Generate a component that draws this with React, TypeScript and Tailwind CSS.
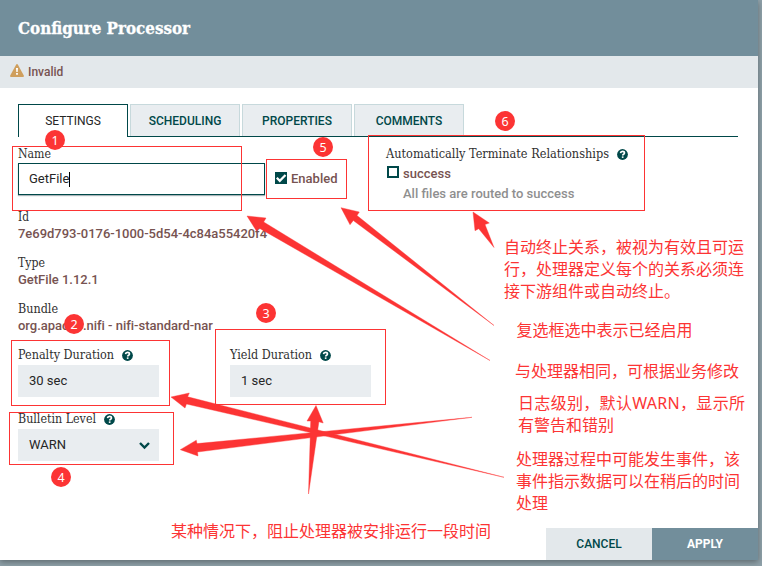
import type { ReactNode } from 'react';

const RED = '#fc3434';

function Help({ className = '' }: { className?: string }) {
  return (
    <svg viewBox="0 0 10 10" className={`h-[11px] w-[11px] shrink-0 ${className}`}>
      <circle cx="5" cy="5" r="4.9" fill="#004849" />
      <path d="M3.2 3.8C3.3 2.7 4 2.2 5 2.2S6.8 2.8 6.8 3.7C6.8 4.8 5.3 4.8 5.2 5.9" fill="none" stroke="#fff" strokeWidth="1.5" />
      <rect x="4.4" y="6.7" width="1.5" height="1.4" fill="#fff" />
    </svg>
  );
}

function Label({ children, help, width }: { children: string; help?: boolean; width: number }) {
  return (
    <div className="flex h-[18px] items-center whitespace-nowrap font-['Roboto_Slab','DejaVu_Serif_Condensed','DejaVu_Serif',serif] text-[12px] leading-[18px] text-[#262626]">
      <svg className="h-[18px] shrink-0 overflow-visible" width={width} height="18">
        <text x="0" y="13" textLength={width} lengthAdjust="spacingAndGlyphs" fill="#303030">{children}</text>
      </svg>
      {help && <Help className="ml-2" />}
    </div>
  );
}

function Value({ children }: { children: string }) {
  return <div className="-mt-px mb-px h-[17px] whitespace-nowrap text-[13px] font-medium leading-[17px] tracking-[-0.02px] text-[#775351]">{children}</div>;
}

function Tab({ children }: { children: string }) {
  return (
    <div className="flex h-8 w-[110px] items-center justify-center border border-b-0 border-[#c7d9dc] bg-[#e9edf0] pt-px text-[12px] font-medium text-[#004849]">
      {children}
    </div>
  );
}

function Box({ children }: { children: ReactNode }) {
  return <div className="flex h-8 w-[141px] items-center bg-[#e9edf0] pl-[11px] pr-[8px] text-[13px] text-[#262626]">{children}</div>;
}

const frames = [
  [12.5, 146.5, 229, 64],
  [266.5, 159.5, 80, 39],
  [368.5, 135.5, 276, 75],
  [11.5, 340.5, 158, 65],
  [215.5, 329.5, 170, 75],
  [9.5, 412.5, 164, 52],
];

const arrows = [
  '473,212 489.3,223 485,224.5 494,247.5 478.7,228.7 475,230.7',
  '341,207.7 359.3,212 357,215.5 494,325.5 353.3,220.5 350,224.7',
  '247,216 266,218 263.7,222 490,360.5 259.3,228.2 256.5,231',
  '171,397 189.3,393 187.7,396.8 504,477.3 186.5,404 185,408',
  '180.3,449.7 196.3,440.2 197,443.6 472,417.3 197.5,452 198,456',
  '316,405.5 323.2,423 318.9,421.8 308.5,494 310.7,421 307,421',
];

const badges = [
  [55, 140],
  [74, 324],
  [266, 313],
  [61, 477],
  [323, 147],
  [505, 121],
];

const notes: { x: number; y: number; lines: string[]; widths: number[] }[] = [
  { x: 504, y: 252.5, lines: ['自动终止关系，被视为有效且可运', '行，处理器定义每个的关系必须连', '接下游组件或自动终止。'], widths: [240, 240, 176] },
  { x: 516.5, y: 335.5, lines: ['复选框选中表示已经启用'], widths: [176] },
  { x: 515, y: 376.5, lines: ['与处理器相同，可根据业务修改'], widths: [224] },
  { x: 518, y: 408.5, lines: ['日志级别，默认WARN，显示所', '有警告和错别'], widths: [227, 96] },
  { x: 516, y: 464.5, lines: ['处理器过程中可能发生事件，该', '事件指示数据可以在稍后的时间', '处理'], widths: [224, 224, 32] },
  { x: 171, y: 536.5, lines: ['某种情况下，阻止处理器被安排运行一段时间'], widths: [320] },
];

function Annotations() {
  return (
    <svg className="pointer-events-none absolute left-0 top-0" width="762" height="566">
      {frames.map(([x, y, w, h]) => (
        <rect key={`${x}-${y}`} x={x} y={y} width={w} height={h} fill="none" stroke={RED} strokeWidth="1" />
      ))}
      {arrows.map((points) => (
        <polygon key={points} points={points} fill={RED} stroke={RED} strokeWidth="0.4" />
      ))}
      {badges.map(([x, y], i) => (
        <g key={i}>
          <circle cx={x} cy={y} r="10" fill={RED} />
          <text x={x} y={y + 4.5} textAnchor="middle" fontSize="12.5" fill="#fff" className="font-['Noto_Sans',sans-serif]">{i + 1}</text>
        </g>
      ))}
      {notes.map((n) =>
        n.lines.map((line, i) => (
          <text
            key={line}
            x={n.x}
            y={n.y + i * 22}
            fontSize="16"
            textLength={n.widths[i]}
            fill={RED}
            className="font-['Noto_Sans','Noto_Sans_CJK_SC',sans-serif]"
          >
            {line}
          </text>
        )),
      )}
    </svg>
  );
}

export default function App() {
  return (
    <div className="relative h-[566px] w-[762px] overflow-hidden bg-[#8fa1a9] font-[Roboto,sans-serif]">
      <div className="flex h-[560px] w-[758px] flex-col bg-white shadow-[0_2px_6px_rgba(0,0,0,0.35)]">
        <header className="flex h-14 shrink-0 items-center bg-[#728e9b] pl-[18px]">
          <svg width="173" height="24" className="overflow-visible">
            <text x="0" y="18" textLength="172" lengthAdjust="spacingAndGlyphs" fill="#fff" stroke="#fff" strokeWidth="0.3" className="font-['Roboto_Slab','DejaVu_Serif_Condensed','DejaVu_Serif',serif] text-[17.5px] font-bold">Configure Processor</text>
          </svg>
        </header>
        <div className="flex h-8 shrink-0 items-center bg-[#e3e8eb] pl-[10px] text-[12px] font-medium text-[#775351]">
          <svg width="14" height="13" viewBox="0 0 14 13" className="mb-[3px] mr-1">
            <path d="M6.2.5Q7-.4 7.8.5L13.8 11.6Q14.2 13 13 13H1Q-.2 13 .2 11.6Z" fill="#cf9f5d" />
            <path d="M6 4h2l-.3 4H6.3zM6.1 9h1.8v1.8H6.1z" fill="#fff" />
          </svg>
          Invalid
        </div>

        <nav className="ml-[18px] mt-4 flex h-[33px] w-[720px] shrink-0 gap-[2px] border-b border-[#004849]">
          <div className="flex h-[33px] w-[110px] items-center justify-center border border-b-0 border-[#004849] bg-white text-[12px] text-[#262626]">SETTINGS</div>
          <Tab>SCHEDULING</Tab>
          <Tab>PROPERTIES</Tab>
          <Tab>COMMENTS</Tab>
        </nav>

        <main className="flex h-[391px] shrink-0 pl-[18px] pt-2">
          <section className="w-[368px]">
            <Label width={33}>Name</Label>
            <div className="flex items-center">
              <div className="flex h-8 w-[247px] items-center border border-[#004849] pl-[10px] text-[13px] text-[#262626] shadow-[0_1px_1px_#a9b5b9]">
                GetFile<span className="h-[15px] w-px bg-black" />
              </div>
              <div className="ml-[10px] flex items-center text-[13px] font-medium text-[#775351]">
                <svg width="12" height="12" className="mb-[3px] mr-1">
                  <rect width="12" height="12" fill="#004849" />
                  <path d="M1.8 5.7 4.8 8.8 10.5 3" fill="none" stroke="#fff" strokeWidth="2.2" />
                </svg>
                Enabled
              </div>
            </div>
            <div className="mt-[13px] flex flex-col gap-[11px]">
              <div><Label width={11}>Id</Label><Value>7e69d793-0176-1000-5d54-4c84a55420f4</Value></div>
              <div><Label width={27}>Type</Label><Value>GetFile 1.12.1</Value></div>
              <div><Label width={40}>Bundle</Label><Value>org.apache.nifi - nifi-standard-nar</Value></div>
            </div>
            <div className="mt-[11px] flex gap-[71px]">
              <div className="flex flex-col gap-px">
                <Label width={96} help>Penalty Duration</Label>
                <Box>30 sec</Box>
              </div>
              <div className="flex flex-col gap-px">
                <Label width={82} help>Yield Duration</Label>
                <Box>1 sec</Box>
              </div>
            </div>
            <div className="mt-[13px] flex flex-col gap-px">
              <Label width={78} help>Bulletin Level</Label>
              <Box>
                <span className="flex-1">WARN</span>
                <svg width="13" height="9"><path d="M2 2 6.5 6.5 11 2" fill="none" stroke="#004849" strokeWidth="2.4" /></svg>
              </Box>
            </div>
          </section>

          <section>
            <Label width={223} help>Automatically Terminate Relationships</Label>
            <div className="mt-px flex h-5 items-center pl-px text-[13px] font-medium text-[#775351]">
              <span className="mb-[4px] mr-1 h-3 w-3 border-2 border-[#004849]" />
              success
            </div>
            <div className="h-5 pl-[17px] text-[13px] font-medium leading-5 text-[#8f8f8f]">All files are routed to success</div>
          </section>
        </main>

        <footer className="flex h-8 shrink-0 justify-end text-[12px]">
          <div className="flex w-[106px] items-center justify-center bg-[#e3e8eb] font-medium text-[#004849]">CANCEL</div>
          <div className="flex w-[106px] items-center justify-center bg-[#728e9b] font-bold text-white">APPLY</div>
        </footer>
      </div>
      <Annotations />
    </div>
  );
}
